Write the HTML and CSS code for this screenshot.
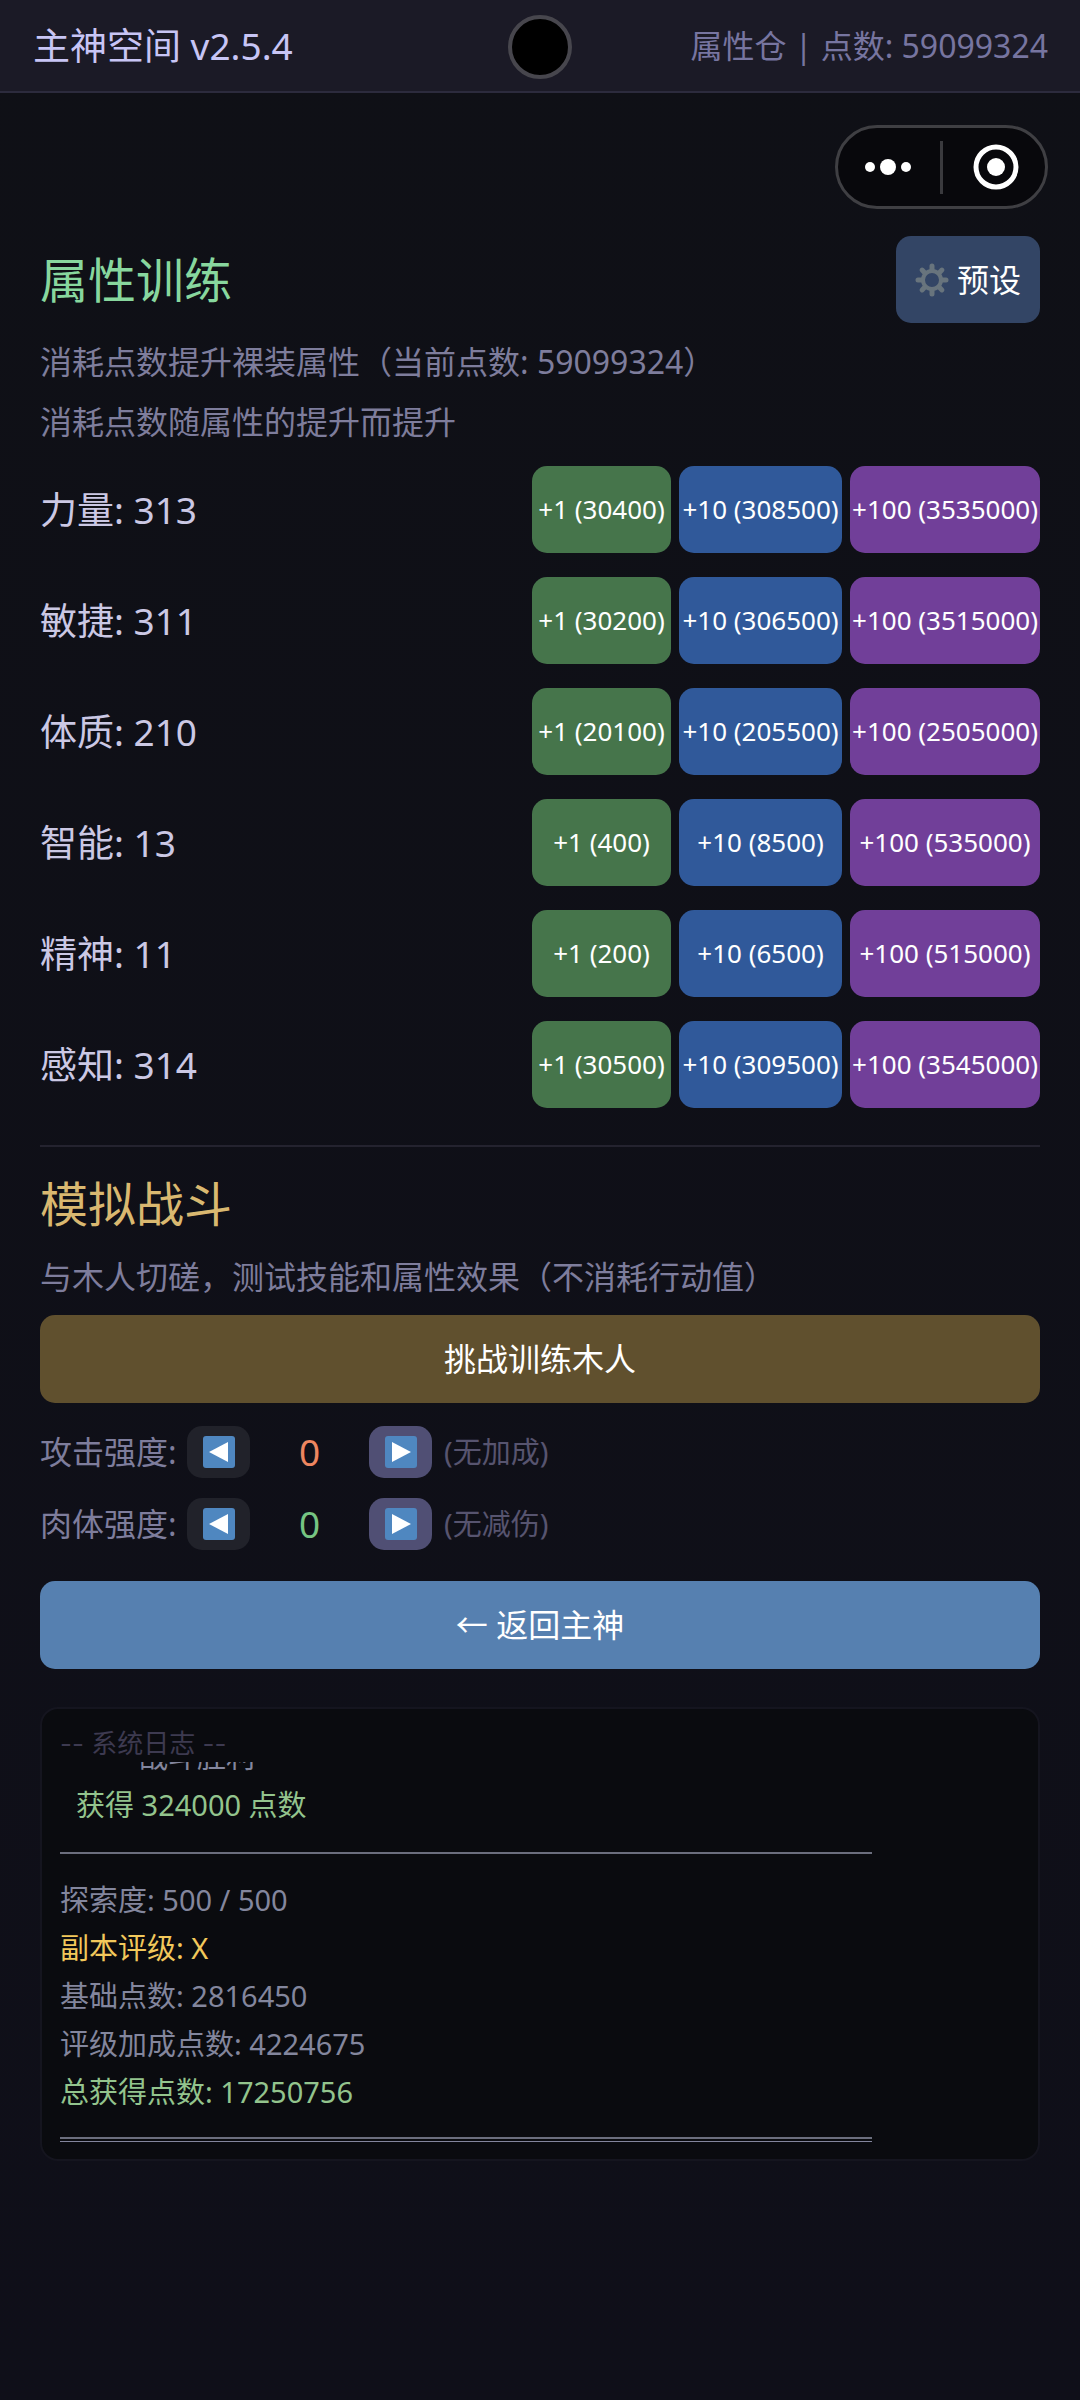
FILE: index.html
```html
<!DOCTYPE html>
<html lang="zh-CN">
<head>
<meta charset="utf-8">
<meta name="viewport" content="width=device-width, initial-scale=1">
<title>主神空间</title>
<link rel="stylesheet" href="styles.css">
</head>
<body>
<header class="topbar">
  <span class="topbar-title">主神空间 v2.5.4</span>
  <span class="camera" aria-hidden="true"></span>
  <span class="topbar-status">属性仓 | 点数: 59099324</span>
</header>

<nav class="capsule-row" aria-label="小程序">
  <div class="capsule">
    <button class="capsule-btn capsule-more" type="button" aria-label="更多">
      <svg width="46" height="46" viewBox="0 0 46 46" fill="#fff"><circle cx="5" cy="23" r="5"/><circle cx="23" cy="23" r="8"/><circle cx="41" cy="23" r="5"/></svg>
    </button>
    <span class="capsule-divider"></span>
    <button class="capsule-btn capsule-close" type="button" aria-label="关闭">
      <svg width="46" height="46" viewBox="0 0 46 46"><circle cx="23" cy="23" r="20" fill="none" stroke="#fff" stroke-width="5"/><circle cx="23" cy="23" r="9" fill="#fff"/></svg>
    </button>
  </div>
</nav>

<main class="page">
  <section class="training">
    <div class="section-head">
      <h1 class="heading heading-green">属性训练</h1>
      <button class="preset" type="button">
        <svg width="34" height="34" viewBox="0 0 34 34" fill="none" stroke="#68747d"><circle cx="17" cy="17" r="9" stroke-width="4"/><path d="M17 3v4M17 27v4M3 17h4M27 17h4M7.1 7.1l2.8 2.8M24.1 24.1l2.8 2.8M26.9 7.1l-2.8 2.8M9.9 24.1l-2.8 2.8" stroke-width="5" stroke-linecap="round"/></svg>
        <span>预设</span>
      </button>
    </div>
    <p class="note">消耗点数提升裸装属性（当前点数: 59099324）</p>
    <p class="note">消耗点数随属性的提升而提升</p>
    <ul class="stats">
      <li class="stat"><span class="stat-name">力量: 313</span><button class="up up-1" type="button">+1 (30400)</button><button class="up up-10" type="button">+10 (308500)</button><button class="up up-100" type="button">+100 (3535000)</button></li>
      <li class="stat"><span class="stat-name">敏捷: 311</span><button class="up up-1" type="button">+1 (30200)</button><button class="up up-10" type="button">+10 (306500)</button><button class="up up-100" type="button">+100 (3515000)</button></li>
      <li class="stat"><span class="stat-name">体质: 210</span><button class="up up-1" type="button">+1 (20100)</button><button class="up up-10" type="button">+10 (205500)</button><button class="up up-100" type="button">+100 (2505000)</button></li>
      <li class="stat"><span class="stat-name">智能: 13</span><button class="up up-1" type="button">+1 (400)</button><button class="up up-10" type="button">+10 (8500)</button><button class="up up-100" type="button">+100 (535000)</button></li>
      <li class="stat"><span class="stat-name">精神: 11</span><button class="up up-1" type="button">+1 (200)</button><button class="up up-10" type="button">+10 (6500)</button><button class="up up-100" type="button">+100 (515000)</button></li>
      <li class="stat"><span class="stat-name">感知: 314</span><button class="up up-1" type="button">+1 (30500)</button><button class="up up-10" type="button">+10 (309500)</button><button class="up up-100" type="button">+100 (3545000)</button></li>
    </ul>
  </section>

  <section class="battle">
    <h2 class="heading heading-gold">模拟战斗</h2>
    <p class="note">与木人切磋，测试技能和属性效果（不消耗行动值）</p>
    <button class="wide wide-gold" type="button">挑战训练木人</button>
    <div class="steppers">
      <div class="stepper" role="group" aria-label="攻击强度">
        <span class="stepper-label">攻击强度:</span>
        <button class="step step-off" type="button" aria-label="降低攻击强度"><svg width="32" height="32" viewBox="0 0 32 32"><rect width="32" height="32" rx="3" fill="#4f87c0"/><path d="M25 6v20L6 16z" fill="#fff"/></svg></button>
        <output class="stepper-value value-orange">0</output>
        <button class="step" type="button" aria-label="提高攻击强度"><svg width="32" height="32" viewBox="0 0 32 32"><rect width="32" height="32" rx="3" fill="#4f87c0"/><path d="M7 6v20l19-10z" fill="#fff"/></svg></button>
        <span class="stepper-hint">(无加成)</span>
      </div>
      <div class="stepper" role="group" aria-label="肉体强度">
        <span class="stepper-label">肉体强度:</span>
        <button class="step step-off" type="button" aria-label="降低肉体强度"><svg width="32" height="32" viewBox="0 0 32 32"><rect width="32" height="32" rx="3" fill="#4f87c0"/><path d="M25 6v20L6 16z" fill="#fff"/></svg></button>
        <output class="stepper-value value-green">0</output>
        <button class="step" type="button" aria-label="提高肉体强度"><svg width="32" height="32" viewBox="0 0 32 32"><rect width="32" height="32" rx="3" fill="#4f87c0"/><path d="M7 6v20l19-10z" fill="#fff"/></svg></button>
        <span class="stepper-hint">(无减伤)</span>
      </div>
    </div>
    <button class="wide wide-blue" type="button">← 返回主神</button>
  </section>

  <section class="log">
    <h3 class="log-title">-- 系统日志 --</h3>
    <div class="log-view">
      <ul class="log-lines">
        <li class="indent-2">战斗胜利</li>
        <li class="indent-1 log-green">获得 324000 点数</li>
        <li class="log-rule"><hr class="rule"></li>
        <li>探索度: 500 / 500</li>
        <li class="log-gold">副本评级: X</li>
        <li>基础点数: 2816450</li>
        <li>评级加成点数: 4224675</li>
        <li class="log-green">总获得点数: 17250756</li>
        <li class="log-rule"><hr class="rule rule-double"></li>
      </ul>
    </div>
  </section>
</main>
</body>
</html>
```
FILE: styles.css
```css
* {
  box-sizing: border-box;
}

body {
  margin: 0;
  min-height: 100vh;
  background: linear-gradient(#0f1016, #0f0f19);
  color: #7e7d9c;
  font-family: "Noto Sans", "Noto Sans CJK SC", sans-serif;
  font-size: 32px;
  line-height: 1.5;
}

h1, h2, h3, p, ul {
  margin: 0;
  padding: 0;
  font-weight: 400;
}

ul {
  list-style: none;
}

button {
  display: flex;
  align-items: center;
  justify-content: center;
  margin: 0;
  padding: 0;
  border: 0;
  border-radius: 15px;
  color: #fff;
  font: inherit;
  white-space: nowrap;
}

svg {
  display: block;
}

.topbar {
  position: relative;
  display: flex;
  align-items: center;
  justify-content: space-between;
  height: 93px;
  padding: 0 32px 0 33px;
  border-bottom: 2px solid #2c2b3d;
  background: #1b1a26;
}

.topbar-title {
  color: #c8c5f5;
  font-size: 37px;
}

.topbar-status {
  color: #7775a0;
}

.camera {
  position: absolute;
  top: 15px;
  left: calc(50% - 32px);
  width: 64px;
  height: 64px;
  border: 4px solid #47464d;
  border-radius: 50%;
  background: #000;
}

.capsule-row {
  display: flex;
  justify-content: flex-end;
  padding: 32px 32px 27px;
}

.capsule {
  display: flex;
  align-items: center;
  width: 213px;
  height: 84px;
  border: 3px solid #3f3f43;
  border-radius: 42px;
  background: #08080c;
}

.capsule-btn {
  flex: 1;
  height: 100%;
  background: none;
}

.capsule-more {
  padding-right: 3px;
}

.capsule-close {
  padding-left: 3px;
}

.capsule-divider {
  width: 3px;
  height: 53px;
  background: #3a3a3e;
}

.page {
  padding: 0 40px;
}

.section-head {
  display: flex;
  align-items: center;
  justify-content: space-between;
  margin-bottom: 9px;
}

.heading {
  font-size: 48px;
  line-height: 72px;
}

.heading-green {
  color: #88d79e;
}

.heading-gold {
  color: #d9b870;
}

.preset {
  gap: 8px;
  width: 144px;
  height: 87px;
  background: #334565;
}

.note {
  line-height: 60px;
}

.stats {
  display: grid;
  gap: 24px;
  padding: 14px 0 37px;
  border-bottom: 2px solid #24232f;
}

.stat {
  display: grid;
  grid-template-columns: 1fr 139px 163px 190px;
  align-items: center;
  column-gap: 8px;
}

.stat-name {
  color: #cbc8e4;
  font-size: 37px;
}

.up {
  height: 87px;
  font-size: 26px;
}

.up-1 {
  background: #46754b;
}

.up-10 {
  background: #30599a;
}

.up-100 {
  background: #713f99;
}

.battle {
  padding-top: 21px;
}

.battle .note {
  padding: 7px 0 8px;
}

.wide {
  width: 100%;
  height: 88px;
}

.wide-gold {
  background: #60502e;
}

.wide-blue {
  background: #5680b0;
}

.steppers {
  display: grid;
  gap: 20px;
  padding: 23px 0 31px;
}

.stepper {
  display: flex;
  align-items: center;
  gap: 12px;
  height: 52px;
}

.stepper-label {
  width: 135px;
  white-space: nowrap;
}

.step {
  width: 63px;
  height: 52px;
  background: #504f74;
}

.step-off {
  background: #21222a;
}

.stepper-value {
  width: 95px;
  font-size: 37px;
  text-align: center;
}

.value-orange {
  color: #ee8660;
}

.value-green {
  color: #76c582;
}

.stepper-hint {
  color: #57546f;
  font-size: 29px;
}

.log {
  display: flex;
  flex-direction: column;
  height: 454px;
  margin-top: 38px;
  padding: 16px 18px 0;
  border: 2px solid #15151f;
  border-radius: 18px;
  background: #0a0b0f;
}

.log-title {
  color: #3d3a50;
  font-family: Inter, "Noto Sans CJK SC", sans-serif;
  font-size: 26px;
  line-height: 37px;
}

.log-view {
  flex: 1;
  min-height: 0;
  overflow: hidden;
}

/* The log is scrolled so that its newest line rests on the bottom edge. */
.log-lines {
  margin-top: -29px;
  color: #83869d;
  font-size: 29px;
  line-height: 48px;
}

.indent-1 {
  padding-left: 16px;
}

.indent-2 {
  padding-left: 79px;
}

.log-green {
  color: #93c48d;
}

.log-gold {
  color: #f2c85b;
}

.log-rule {
  display: flex;
  align-items: center;
  height: 47px;
}

.rule {
  width: 812px;
  max-width: 100%;
  margin: 0;
  border: 0;
  border-top: 2px solid #6b6e7d;
}

.rule-double {
  height: 5px;
  border-bottom: 1px solid #83869d;
}
```
